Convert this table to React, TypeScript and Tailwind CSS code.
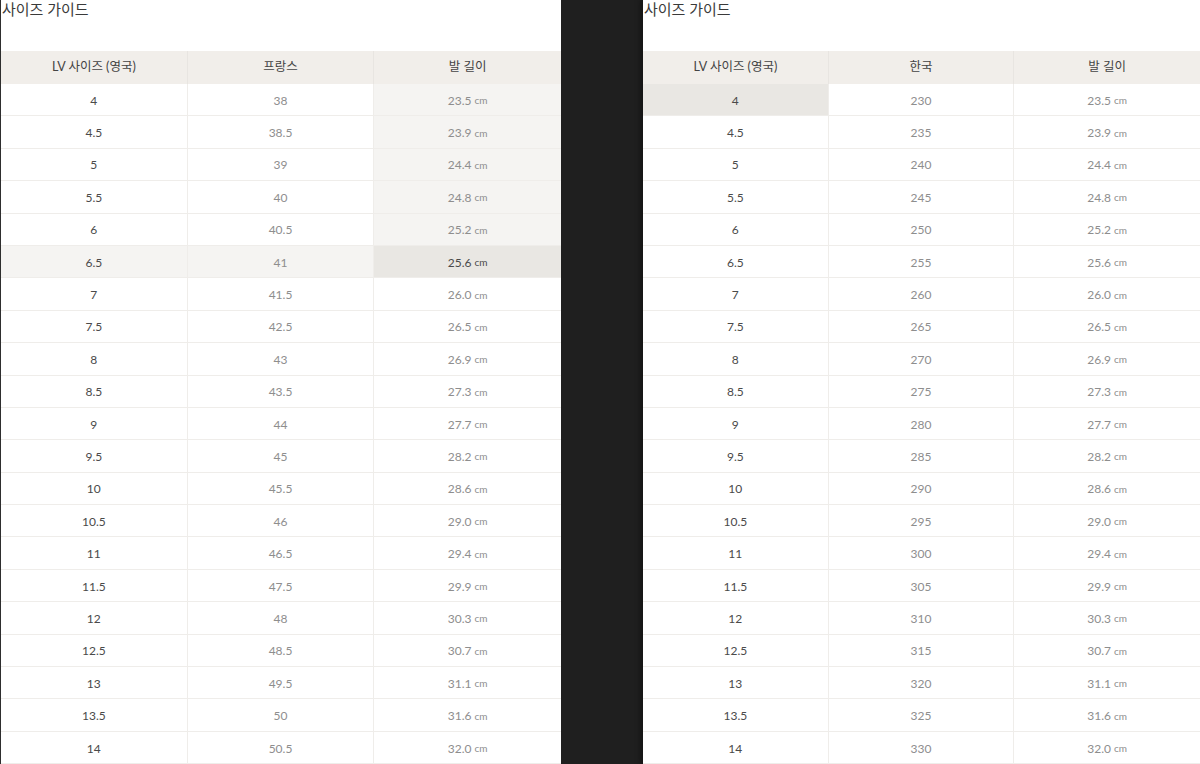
const uk = ['4', '4.5', '5', '5.5', '6', '6.5', '7', '7.5', '8', '8.5', '9', '9.5', '10', '10.5', '11', '11.5', '12', '12.5', '13', '13.5', '14']
const fr = ['38', '38.5', '39', '40', '40.5', '41', '41.5', '42.5', '43', '43.5', '44', '45', '45.5', '46', '46.5', '47.5', '48', '48.5', '49.5', '50', '50.5']
const foot = ['23.5', '23.9', '24.4', '24.8', '25.2', '25.6', '26.0', '26.5', '26.9', '27.3', '27.7', '28.2', '28.6', '29.0', '29.4', '29.9', '30.3', '30.7', '31.1', '31.6', '32.0']
const kr = uk.map((_, i) => String(230 + i * 5))

const font = "font-['Lato','Noto_Sans_CJK_KR',sans-serif]"

type Hl = { row?: number; col?: number; cell?: [number, number] }

function SizeTable({ second, secondLabel, hl }: { second: string[]; secondLabel: string; hl: Hl }) {
  return (
    <div className={`flex flex-col ${font}`}>
      <div className="h-[51px] text-[15px] leading-[18px] text-[#3a3a3a] pl-px">사이즈 가이드</div>
      <div className="grid grid-cols-3 h-[33px] bg-[#f1eeea] text-[12.5px] text-[#444]">
        <div className="flex items-center justify-center border-r border-[#e8e5e1]">LV 사이즈 (영국)</div>
        <div className="flex items-center justify-center border-r border-[#e8e5e1]">{secondLabel}</div>
        <div className="flex items-center justify-center">발 길이</div>
      </div>
      {uk.map((size, i) => {
        const rowHl = hl.row === i
        const cellBg = (c: number) => {
          if (hl.cell && hl.cell[0] === i && hl.cell[1] === c) return 'bg-[#e9e7e3]'
          if (rowHl || (hl.col === c && hl.row !== undefined && i < hl.row)) return 'bg-[#f5f4f2]'
          return 'bg-white'
        }
        const dark = (c: number) => hl.cell && hl.cell[0] === i && hl.cell[1] === c && c !== 0
        return (
          <div key={size} className="grid grid-cols-3 h-[32.4px] border-b border-[#efedea] text-[12px]">
            <div className={`flex items-center justify-center pt-[2px] border-r border-[#efedea] text-[#4a4a4a] ${cellBg(0)}`}>{size}</div>
            <div className={`flex items-center justify-center pt-[2px] border-r border-[#efedea] text-[#8e8e8e] ${cellBg(1)}`}>{second[i]}</div>
            <div className={`flex items-center justify-center pt-[2px] ${dark(2) ? 'text-[#4a4a4a]' : 'text-[#8e8e8e]'} ${cellBg(2)}`}>
              {foot[i]}<span className="text-[10px] ml-[3px]">cm</span>
            </div>
          </div>
        )
      })}
    </div>
  )
}

export default function App() {
  return (
    <div className="w-[1200px] h-[764px] overflow-hidden bg-[#1f1f1f] flex">
      <div className="w-[561px] h-full bg-white border-l border-[#2e2e2e] shrink-0">
        <SizeTable second={fr} secondLabel="프랑스" hl={{ row: 5, col: 2, cell: [5, 2] }} />
      </div>
      <div className="w-[82px] shrink-0" />
      <div className="flex-1 h-full bg-white shadow-[-3px_0_5px_rgba(0,0,0,0.35)]">
        <SizeTable second={kr} secondLabel="한국" hl={{ cell: [0, 0] }} />
      </div>
    </div>
  )
}
